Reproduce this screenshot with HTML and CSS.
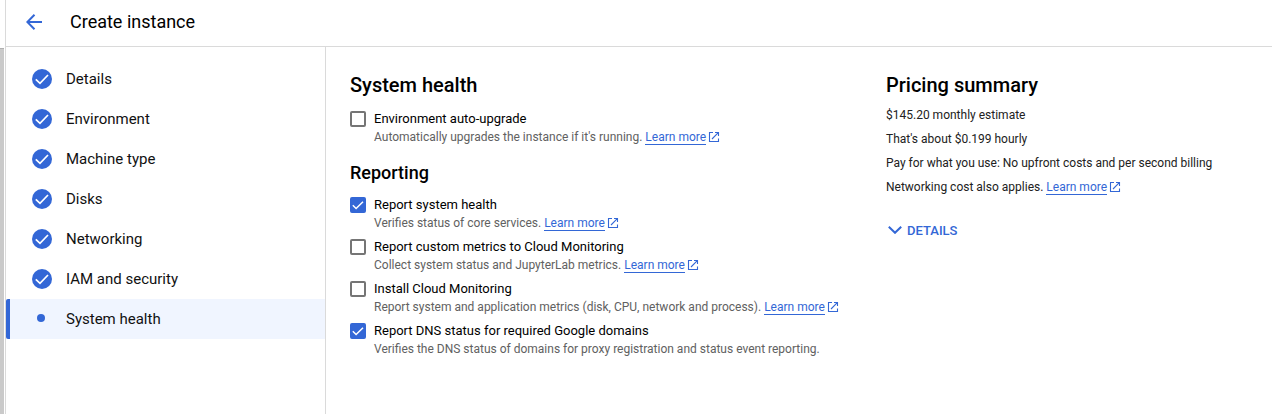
FILE: index.html
```html
<!DOCTYPE html>
<html lang="en">
<head>
<meta charset="utf-8">
<title>Create instance</title>
<link rel="stylesheet" href="styles.css">
</head>
<body>
<svg class="sprite" aria-hidden="true">
  <symbol id="done" viewBox="0 0 20 20"><circle cx="10" cy="10" r="10" fill="#3367d6"/><path d="M3.800 10.300l4.200 4L16 6" fill="none" stroke="#fff" stroke-width="1.700"/></symbol>
  <symbol id="external" viewBox="0 0 12 12"><path d="M5 1.500H1.500v9h9V7.500M7 1.500h3.500V5M10.300 1.700L4 8" fill="none" stroke="#3367d6" stroke-width="1.100"/></symbol>
  <symbol id="tick" viewBox="0 0 16 16"><path d="M2.800 8.300l3.300 3.200L13 4.700" fill="none" stroke="#fff" stroke-width="1.500"/></symbol>
</svg>
<div class="shell">
  <div class="rail"><div class="rail-head"></div><div class="rail-body"></div></div>
  <div class="page">
    <header class="topbar">
      <button class="back" type="button" aria-label="Back"><svg width="16" height="16" viewBox="0 0 16 16"><path d="M16 8H1.500M8.500 .8L1.300 8l7.200 7.200" fill="none" stroke="#3367d6" stroke-width="2"/></svg></button>
      <h1 class="title">Create instance</h1>
    </header>
    <div class="body">
      <nav class="steps">
        <a class="step" href="#details"><svg class="done"><use href="#done"/></svg>Details</a>
        <a class="step" href="#environment"><svg class="done"><use href="#done"/></svg>Environment</a>
        <a class="step" href="#machine"><svg class="done"><use href="#done"/></svg>Machine type</a>
        <a class="step" href="#disks"><svg class="done"><use href="#done"/></svg>Disks</a>
        <a class="step" href="#networking"><svg class="done"><use href="#done"/></svg>Networking</a>
        <a class="step" href="#iam"><svg class="done"><use href="#done"/></svg>IAM and security</a>
        <a class="step current" href="#health" aria-current="step"><span class="dot"></span>System health</a>
      </nav>
      <main class="content">
        <form class="settings">
          <h2 class="heading">System health</h2>
          <div class="option">
            <span class="check"><input class="box" type="checkbox" id="upgrade"><svg class="tick"><use href="#tick"/></svg></span>
            <div><label class="label" for="upgrade">Environment auto-upgrade</label>
            <p class="hint">Automatically upgrades the instance if it's running. <a class="link" href="#learn">Learn more</a><svg class="external"><use href="#external"/></svg></p></div>
          </div>
          <h3 class="subheading">Reporting</h3>
          <div class="option">
            <span class="check"><input class="box" type="checkbox" id="report" checked><svg class="tick"><use href="#tick"/></svg></span>
            <div><label class="label" for="report">Report system health</label>
            <p class="hint">Verifies status of core services. <a class="link" href="#learn">Learn more</a><svg class="external"><use href="#external"/></svg></p></div>
          </div>
          <div class="option">
            <span class="check"><input class="box" type="checkbox" id="metrics"><svg class="tick"><use href="#tick"/></svg></span>
            <div><label class="label" for="metrics">Report custom metrics to Cloud Monitoring</label>
            <p class="hint">Collect system status and JupyterLab metrics. <a class="link" href="#learn">Learn more</a><svg class="external"><use href="#external"/></svg></p></div>
          </div>
          <div class="option">
            <span class="check"><input class="box" type="checkbox" id="install"><svg class="tick"><use href="#tick"/></svg></span>
            <div><label class="label" for="install">Install Cloud Monitoring</label>
            <p class="hint">Report system and application metrics (disk, CPU, network and process). <a class="link" href="#learn">Learn more</a><svg class="external"><use href="#external"/></svg></p></div>
          </div>
          <div class="option">
            <span class="check"><input class="box" type="checkbox" id="dns" checked><svg class="tick"><use href="#tick"/></svg></span>
            <div><label class="label" for="dns">Report DNS status for required Google domains</label>
            <p class="hint">Verifies the DNS status of domains for proxy registration and status event reporting.</p></div>
          </div>
        </form>
        <aside class="pricing">
          <h2 class="heading">Pricing summary</h2>
          <p class="line">$145.20 monthly estimate</p>
          <p class="line">That's about $0.199 hourly</p>
          <p class="line">Pay for what you use: No upfront costs and per second billing</p>
          <p class="line">Networking cost also applies. <a class="link" href="#learn">Learn more</a><svg class="external"><use href="#external"/></svg></p>
          <button class="details" type="button"><svg width="14" height="8" viewBox="0 0 14 8"><path d="M.8 .8L7 6.800 13.200 .8" fill="none" stroke="#3367d6" stroke-width="2"/></svg>DETAILS</button>
        </aside>
      </main>
    </div>
  </div>
</div>
</body>
</html>
```
FILE: styles.css
```css
* { box-sizing: border-box; }
body { margin: 0; background: #fff; color: #000; font-family: Roboto, sans-serif; }
h1, h2, h3, p { margin: 0; }
button { border: 0; padding: 0; background: none; font-family: inherit; cursor: pointer; }
.sprite { position: absolute; width: 0; height: 0; }

.shell { display: flex; min-height: 100vh; }
.rail { display: flex; flex-direction: column; width: 5px; padding-right: 1px; }
.rail-head { height: 48px; }
.rail-body { flex: 1; background: #cacaca; border-top: 1px solid #b0b0b0; }
.page { flex: 1; display: flex; flex-direction: column; min-width: 0; border-left: 1px solid #dadada; }

.topbar { display: flex; align-items: center; gap: 28px; height: 47px; padding: 0 20px 2px; border-bottom: 1px solid #dadada; }
.back { display: flex; }
.title { font-size: 18px; line-height: 24px; font-weight: 400; }

.body { flex: 1; display: flex; }
.steps { flex: none; width: 320px; padding-top: 12px; border-right: 1px solid #dadada; }
.step { display: flex; align-items: center; gap: 14px; height: 40px; padding-left: 26px; color: #111; font-size: 15px; line-height: 20px; text-decoration: none; }
.done { width: 20px; height: 20px; }
.current { padding-left: 22px; border-left: 4px solid #3367d6; border-radius: 2px 0 0 2px; background: #f0f5ff; }
.dot { width: 8px; height: 8px; margin: 0 7px 2px 5px; border-radius: 50%; background: #3367d6; }

.content { flex: 1; display: grid; grid-template-columns: 512px 1fr; gap: 24px; align-items: start; padding: 24px; }
.heading { margin-bottom: 4px; font-size: 20px; line-height: 28px; font-weight: 500; }
.settings .heading { margin-bottom: 10px; }
.subheading { margin: 16px 0 10px; font-size: 18px; line-height: 24px; font-weight: 500; }
.option { display: flex; gap: 8px; margin-bottom: 6px; }
.check { position: relative; flex: none; width: 16px; height: 16px; margin-top: 2px; }
.box { appearance: none; display: block; width: 16px; height: 16px; margin: 0; border: 2px solid #757575; border-radius: 2px; background: #fff; }
.box:checked { border-color: #3367d6; background: #3367d6; }
.tick { display: none; position: absolute; inset: 0; width: 16px; height: 16px; pointer-events: none; }
.box:checked + .tick { display: block; }
.label { display: block; font-size: 13px; line-height: 20px; }
.hint { color: #616161; font-size: 12px; line-height: 16px; }
.link { border-bottom: 1px solid #3367d6; color: #3367d6; text-decoration: none; }
.external { width: 12px; height: 12px; margin-left: 2px; vertical-align: -2px; }

.line { color: #212121; font-size: 12px; line-height: 24px; }
.details { display: flex; align-items: center; gap: 5px; height: 36px; margin-top: 13px; padding-left: 2px; color: #3367d6; font-size: 13px; font-weight: 500; }
```
